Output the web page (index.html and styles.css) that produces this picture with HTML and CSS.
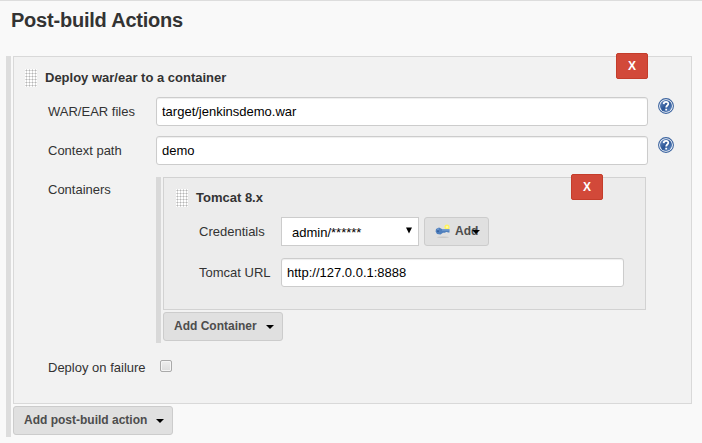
FILE: index.html
```html
<!DOCTYPE html>
<html lang="en">
<head>
<meta charset="utf-8">
<title>Post-build Actions</title>
<link rel="stylesheet" href="styles.css">
</head>
<body>
<svg class="defs" width="0" height="0">
  <defs>
    <linearGradient id="blue" x1="0" y1="0" x2="1" y2="1"><stop offset="0" stop-color="#7395c8"/><stop offset=".5" stop-color="#2c5596"/><stop offset="1" stop-color="#6d97cf"/></linearGradient>
    <symbol id="help" viewBox="0 0 16 16"><circle cx="8" cy="8" r="7.4" fill="#fff" stroke="#3c649f" stroke-width="1.1"/><circle cx="8" cy="8" r="6" fill="url(#blue)"/><path d="M5.7 6.1C5.8 3.1 10.4 3.2 10.3 5.9C10.2 7.5 8.2 7.5 8.2 9.4M8.2 10.8V12.5" fill="none" stroke="#fff" stroke-width="1.8"/></symbol>
  </defs>
</svg>
<h1 class="heading">Post-build Actions</h1>
<main class="group">
  <section class="panel">
    <button class="delete">X</button>
    <div class="title"><span class="grip"></span><span>Deploy war/ear to a container</span></div>
    <div class="row"><label>WAR/EAR files</label><input class="field" type="text" value="target/jenkinsdemo.war"><svg class="help"><use href="#help"/></svg></div>
    <div class="row"><label>Context path</label><input class="field" type="text" value="demo"><svg class="help"><use href="#help"/></svg></div>
    <div class="containers">
      <label>Containers</label>
      <div class="group nested">
        <section class="panel">
          <button class="delete">X</button>
          <div class="title"><span class="grip"></span><span>Tomcat 8.x</span></div>
          <div class="row credentials"><label>Credentials</label><div class="select"><span>admin/******</span><svg width="6" height="7"><path d="M0 .5H6L3 6.5Z"/></svg></div>
            <button class="button add"><svg class="key" width="16" height="16" viewBox="0 0 16 16"><ellipse cx="8" cy="13.3" rx="6" ry=".8" fill="#c8c8c8"/><circle cx="12" cy="3" r="2.6" fill="#fff45a"/><circle cx="12" cy="3" r="1.3" fill="#fff8a0"/><path d="M1 5L4 3.4L7.5 5.2H14.5V8.5H12.5V7.9H10.5V8.7H8L5.5 10.6L2 10L.6 7.5Z" fill="#4f7fbd"/><path d="M7 6H14M2.4 5.6L4 4.8" stroke="#7fa6d6"/><circle cx="3" cy="7.2" r="1" fill="#345f9e"/></svg><span>Add</span><svg class="caret" width="8" height="4"><path d="M0 0H8L4 4Z"/></svg></button>
          </div>
          <div class="row url"><label>Tomcat URL</label><input class="field" type="text" value="http://127.0.0.1:8888"></div>
        </section>
        <button class="button container-button"><span>Add Container</span><svg width="8" height="4"><path d="M0 0H8L4 4Z"/></svg></button>
      </div>
    </div>
    <div class="failure"><label>Deploy on failure</label><span class="checkbox" role="checkbox" aria-checked="false"></span></div>
  </section>
  <button class="button action-button"><span>Add post-build action</span><svg width="8" height="4"><path d="M0 0H8L4 4Z"/></svg></button>
</main>
</body>
</html>
```
FILE: styles.css
```css
* { box-sizing: border-box; }
body {
  margin: 0;
  height: 443px;
  overflow: hidden;
  background: #f9f9f9;
  border-top: 1px solid #ddd;
  color: #333;
  font: 13px/18px "Liberation Sans", sans-serif;
}
.defs { position: absolute; }
button, input { font: inherit; margin: 0; }
.heading { margin: 7px 0 0 11px; height: 48px; font: bold 20px/24px "Liberation Sans", sans-serif; letter-spacing: -.22px; }
.group { margin-left: 6px; width: 686px; height: 381px; border-left: 5px solid #ddd; padding-left: 2px; }
.panel { position: relative; height: 348px; border: 1px solid #d9d9d9; background: #f2f2f2; }
.delete { position: absolute; top: -4px; right: 43px; width: 32px; height: 26px; padding: 0; border: 1px solid #c43d2b; border-radius: 2px; background: #d24939; color: #fff; font: bold 12px/24px "Liberation Sans", sans-serif; }
.title { display: flex; align-items: center; height: 18px; margin: 12px 0 10px 11px; gap: 8px; font-weight: bold; }
.grip { width: 12px; height: 18px; background: radial-gradient(circle at 1.5px 1.5px, #b5b5b5 0 .9px, #fff 1.1px) 0 0 / 3px 3px; }
.row { display: flex; align-items: center; height: 29px; margin-bottom: 10px; padding-left: 34px; }
.row label { width: 108px; }
.field { width: 492px; height: 29px; padding: 0 5px; border: 1px solid #ccc; border-radius: 3px; background: #fff; box-shadow: inset 0 1px 1px #eee; color: #000; outline: none; }
.help { width: 16px; height: 16px; margin: -11px 0 0 10px; }
.containers { display: flex; margin: 12px 0 0 34px; }
.containers > label { width: 108px; padding-top: 4px; }
.nested { margin: 0; width: 490px; height: 166px; border-color: #d9d9d9; }
.nested .panel { width: 483px; height: 133px; background: #ececec; border-color: #d2d2d2; }
.nested .delete { right: 42px; }
.nested .title { margin-top: 11px; margin-left: 12px; }
.nested .row { padding-left: 35px; }
.nested .row label { width: 82px; }
.nested .credentials { margin-bottom: 12px; }
.nested .field { width: 343px; }
.select { display: flex; align-items: center; justify-content: space-between; width: 138px; height: 29px; padding: 2px 6px 0 10px; border: 1px solid #ccc; background: #fff; color: #000; }
.select svg { margin-top: -4px; }
.button { display: flex; align-items: center; height: 29px; padding: 0 10px 1px; border: 1px solid #ccc; border-radius: 3px; background: #e0e0e0; color: #4d4d4d; font: bold 12px/18px "Liberation Sans", sans-serif; }
.button > svg { flex: none; margin-top: 2px; }
.add { width: 65px; margin-left: 5px; }
.button .key { margin: 2px 4px 0 0; }
.add .caret { margin: 1px 0 0 -6px; }
.container-button { width: 120px; margin-top: 2px; padding-right: 8px; justify-content: space-between; }
.action-button { width: 160px; margin-top: 2px; padding-right: 8px; justify-content: space-between; }
.failure { display: flex; height: 18px; margin: 15px 0 0 34px; }
.failure label { width: 112px; padding-top: 1px; }
.checkbox { width: 12px; height: 12px; margin-top: 2px; border: 1px solid #aaa; border-radius: 2px; background: linear-gradient(#eee, #ddd); box-shadow: inset 0 0 0 1px #f5f5f5; }
```
